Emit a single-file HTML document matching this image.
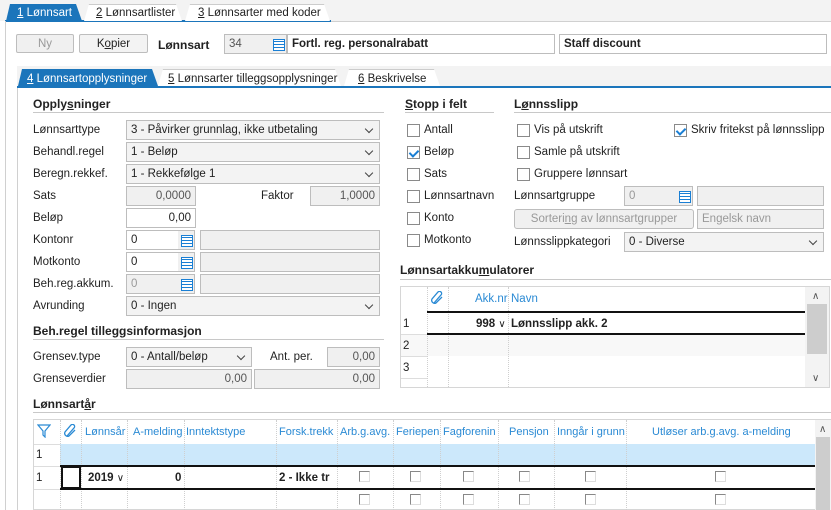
<!DOCTYPE html>
<html><head><meta charset="utf-8"><style>
*{box-sizing:border-box;margin:0;padding:0}
body{width:831px;height:510px;overflow:hidden;background:#fff;font-family:"Liberation Sans",Arial,sans-serif;font-size:11.5px;color:#222;position:relative}
.a{position:absolute}
.t{position:absolute;white-space:nowrap;line-height:14px}
.b{font-weight:bold}
.in{position:absolute;border:1px solid #bdbdbd;background:#fff;height:20px;line-height:18px;padding:0 4px;white-space:nowrap;overflow:hidden}
.dis{background:#f0f0f0;color:#555}
.r{text-align:right}
.dd{position:absolute;border:1px solid #bdbdbd;background:#f3f3f3;height:20px;line-height:18px;padding:0 4px;white-space:nowrap}
.dd:after{content:"";position:absolute;right:7px;top:5px;width:5px;height:5px;border-right:1px solid #444;border-bottom:1px solid #444;transform:rotate(45deg)}
.ic{position:absolute;width:17px;height:20px;background:#f0f0f0;border:1px solid #bdbdbd;border-left:none}
.ic:after{content:"";position:absolute;left:3px;top:4px;width:10px;height:10px;border:1px solid #1a7fd4;background:repeating-linear-gradient(#fff 0 1px,#1a7fd4 1px 2px,#fff 2px 3px);}
.cb{position:absolute;width:13px;height:13px;border:1px solid #8a8a8a;background:#fff}
.ck:after{content:"";position:absolute;left:3px;top:1px;width:4px;height:7px;border-right:2px solid #1a7fd4;border-bottom:2px solid #1a7fd4;transform:rotate(45deg)}
.h{position:absolute;font-weight:bold;font-size:12px;line-height:14px}
.hl{position:absolute;height:1px;background:#c8c8c8}
.gc{position:absolute;width:11px;height:11px;border-left:1px solid #888;border-top:1px solid #888;border-right:1px solid #ddd;border-bottom:1px solid #ddd}
.vl{position:absolute;width:0;border-left:1px dotted #cfcfcf}
.bh{color:#2a8ad4}
u{text-decoration:underline}
</style></head><body>
<div class="a" style="left:0;top:0;width:831px;height:21px;background:#f3f3f3"></div>
<div class="a" style="left:5px;top:20px;width:326px;height:2px;background:#1b75bb"></div>
<div class="a" style="left:5px;top:21px;width:1px;height:489px;background:#d0d0d0"></div>
<div class="a" style="left:6px;top:4px;width:76px;height:17px;background:#1b75bb;clip-path:polygon(4px 0,70px 0,76px 100%,0 100%)"></div>
<div class="t" style="left:17px;top:6px;color:#fff"><u>1</u> Lønnsart</div>
<div class="a" style="left:84px;top:4px;width:98px;height:17px;border-top:1px solid #ccc;background:#fff;clip-path:polygon(5px 0,92px 0,98px 100%,0 100%)"></div>
<div class="t" style="left:96px;top:6px"><u>2</u> Lønnsartlister</div>
<div class="a" style="left:185px;top:4px;width:145px;height:17px;border-top:1px solid #ccc;background:#fff;clip-path:polygon(5px 0,139px 0,145px 100%,0 100%)"></div>
<div class="t" style="left:198px;top:6px"><u>3</u> Lønnsarter med koder</div>
<div class="a" style="left:331px;top:21px;width:500px;height:1px;background:#d0d0d0"></div>

<div class="in dis" style="left:16px;top:34px;width:58px;height:19px;border-radius:2px;text-align:center;color:#999">Ny</div>
<div class="in" style="left:79px;top:34px;width:69px;height:19px;border-radius:2px;text-align:center;background:#f3f3f3">K<u>o</u>pier</div>
<div class="t b" style="left:158px;top:38px;font-size:12px">Lønnsart</div>
<div class="in dis" style="left:224px;top:34px;width:47px">34</div>
<div class="ic" style="left:270px;top:34px"></div>
<div class="in b" style="left:287px;top:34px;width:268px">Fortl. reg. personalrabatt</div>
<div class="in b" style="left:559px;top:34px;width:268px">Staff discount</div>

<div class="a" style="left:17px;top:66px;width:814px;height:20px;background:#f3f3f3"></div>
<div class="a" style="left:17px;top:86px;width:814px;height:2px;background:#1b75bb"></div>
<div class="a" style="left:17px;top:88px;width:1px;height:422px;background:#d0d0d0"></div>
<div class="a" style="left:18px;top:69px;width:140px;height:17px;background:#1b75bb;clip-path:polygon(4px 0,134px 0,140px 100%,0 100%)"></div>
<div class="t" style="left:27px;top:72px;color:#fff"><u>4</u> Lønnsartopplysninger</div>
<div class="a" style="left:158px;top:69px;width:183px;height:17px;background:#fff;border-top:1px solid #ccc;clip-path:polygon(5px 0,177px 0,183px 100%,0 100%)"></div>
<div class="t" style="left:168px;top:72px"><u>5</u> Lønnsarter tilleggsopplysninger</div>
<div class="a" style="left:344px;top:69px;width:96px;height:17px;background:#fff;border-top:1px solid #ccc;clip-path:polygon(5px 0,90px 0,96px 100%,0 100%)"></div>
<div class="t" style="left:358px;top:72px"><u>6</u> Beskrivelse</div>

<div class="h" style="left:33px;top:97px">Opply<u>s</u>ninger</div>
<div class="hl" style="left:33px;top:112px;width:351px"></div>
<div class="t" style="left:33px;top:123px">Lønnsarttype</div>
<div class="dd" style="left:126px;top:120px;width:254px">3 - Påvirker grunnlag, ikke utbetaling</div>
<div class="t" style="left:33px;top:145px">Behandl.regel</div>
<div class="dd" style="left:126px;top:142px;width:254px">1 - Beløp</div>
<div class="t" style="left:33px;top:167px">Beregn.rekkef.</div>
<div class="dd" style="left:126px;top:164px;width:254px">1 - Rekkefølge 1</div>
<div class="t" style="left:33px;top:189px">Sats</div>
<div class="in dis r" style="left:126px;top:186px;width:70px">0,0000</div>
<div class="t" style="left:261px;top:189px">Faktor</div>
<div class="in dis r" style="left:310px;top:186px;width:70px">1,0000</div>
<div class="t" style="left:33px;top:211px">Beløp</div>
<div class="in r" style="left:126px;top:208px;width:70px">0,00</div>
<div class="t" style="left:33px;top:233px">Kontonr</div>
<div class="in" style="left:126px;top:230px;width:53px">0</div><div class="ic" style="left:178px;top:230px"></div>
<div class="in dis" style="left:200px;top:230px;width:180px"></div>
<div class="t" style="left:33px;top:255px">Motkonto</div>
<div class="in" style="left:126px;top:252px;width:53px">0</div><div class="ic" style="left:178px;top:252px"></div>
<div class="in dis" style="left:200px;top:252px;width:180px"></div>
<div class="t" style="left:33px;top:277px">Beh.reg.akkum.</div>
<div class="in dis" style="left:126px;top:274px;width:53px;color:#999">0</div><div class="ic" style="left:178px;top:274px"></div>
<div class="in dis" style="left:200px;top:274px;width:180px"></div>
<div class="t" style="left:33px;top:299px">Avrunding</div>
<div class="dd" style="left:126px;top:296px;width:254px">0 - Ingen</div>

<div class="h" style="left:33px;top:324px">Beh.re<u>g</u>el tilleggsinformasjon</div>
<div class="hl" style="left:33px;top:339px;width:351px"></div>
<div class="t" style="left:33px;top:350px">Grensev.type</div>
<div class="dd" style="left:126px;top:347px;width:126px">0 - Antall/beløp</div>
<div class="t" style="left:270px;top:350px">Ant. per.</div>
<div class="in dis r" style="left:327px;top:347px;width:53px">0,00</div>
<div class="t" style="left:33px;top:372px">Grenseverdier</div>
<div class="in dis r" style="left:126px;top:369px;width:126px">0,00</div>
<div class="in dis r" style="left:254px;top:369px;width:126px">0,00</div>

<div class="h" style="left:405px;top:97px"><u>S</u>topp i felt</div>
<div class="hl" style="left:405px;top:112px;width:89px"></div>
<div class="cb" style="left:407px;top:124px"></div><div class="t" style="left:424px;top:123px">Antall</div>
<div class="cb ck" style="left:407px;top:146px"></div><div class="t" style="left:424px;top:145px">Beløp</div>
<div class="cb" style="left:407px;top:168px"></div><div class="t" style="left:424px;top:167px">Sats</div>
<div class="cb" style="left:407px;top:190px"></div><div class="t" style="left:424px;top:189px">Lønnsartnavn</div>
<div class="cb" style="left:407px;top:212px"></div><div class="t" style="left:424px;top:211px">Konto</div>
<div class="cb" style="left:407px;top:234px"></div><div class="t" style="left:424px;top:233px">Motkonto</div>

<div class="h" style="left:514px;top:97px">L<u>ø</u>nnsslipp</div>
<div class="hl" style="left:514px;top:112px;width:317px"></div>
<div class="cb" style="left:517px;top:124px"></div><div class="t" style="left:534px;top:123px">Vis på utskrift</div>
<div class="cb ck" style="left:674px;top:124px"></div><div class="t" style="left:691px;top:123px">Skriv fritekst på lønnsslipp</div>
<div class="cb" style="left:517px;top:146px"></div><div class="t" style="left:534px;top:145px">Samle på utskrift</div>
<div class="cb" style="left:517px;top:168px"></div><div class="t" style="left:534px;top:167px">Gruppere lønnsart</div>
<div class="t" style="left:514px;top:189px">Lønnsartgruppe</div>
<div class="in dis" style="left:624px;top:186px;width:53px;color:#999">0</div><div class="ic" style="left:676px;top:186px"></div>
<div class="in dis" style="left:697px;top:186px;width:127px"></div>
<div class="in dis" style="left:514px;top:209px;width:180px;border-radius:3px;text-align:center;color:#999">Sorteri<u>n</u>g av lønnsartgrupper</div>
<div class="in dis" style="left:697px;top:209px;width:127px;color:#999">Engelsk navn</div>
<div class="t" style="left:514px;top:235px">Lønnsslippkategori</div>
<div class="dd" style="left:624px;top:232px;width:200px">0 - Diverse</div>

<div class="h" style="left:400px;top:263px">Lønnsartakku<u>m</u>ulatorer</div>
<div class="hl" style="left:400px;top:279px;width:431px"></div>
<div class="a" style="left:400px;top:286px;width:430px;height:102px;border:1px solid #d6d6d6"></div>
<div class="a" style="left:401px;top:334px;width:404px;height:22px;background:#f8f8f8"></div>
<div class="vl" style="left:427px;top:287px;height:100px"></div>
<div class="vl" style="left:448px;top:287px;height:100px"></div>
<div class="vl" style="left:508px;top:287px;height:100px"></div>
<div class="a" style="left:401px;top:334px;width:26px;height:1px;background:#ddd"></div>
<div class="a" style="left:401px;top:356px;width:26px;height:1px;background:#ddd"></div>
<div class="a" style="left:401px;top:378px;width:26px;height:1px;background:#ddd"></div>
<svg class="a" style="left:431px;top:291px" width="13" height="14"><path d="M3 12L10 4A2 2 0 0 0 7 1L1 8A3 3 0 0 0 5 12L11 6" fill="none" stroke="#2a8ad4" stroke-width="1.3"/></svg>
<div class="t bh" style="left:475px;top:292px">Akk.nr</div>
<div class="t bh" style="left:511px;top:292px">Navn</div>
<div class="a" style="left:427px;top:311px;width:378px;height:2px;background:#111"></div>
<div class="a" style="left:427px;top:333px;width:378px;height:2px;background:#111"></div>
<div class="t" style="left:403px;top:317px">1</div>
<div class="t b" style="left:476px;top:317px">998 <span style="font-weight:normal;font-size:10px">&#x2228;</span></div>
<div class="t b" style="left:511px;top:317px">Lønnsslipp akk. 2</div>
<div class="t" style="left:403px;top:339px">2</div>
<div class="t" style="left:403px;top:361px">3</div>
<div class="a" style="left:805px;top:287px;width:24px;height:100px;background:#f3f3f3"></div>
<div class="a" style="left:807px;top:304px;width:20px;height:50px;background:#cdcdcd"></div>
<div class="t" style="left:812px;top:290px;font-size:10px;color:#555">&#x2227;</div>
<div class="t" style="left:812px;top:372px;font-size:10px;color:#555">&#x2228;</div>

<div class="h" style="left:33px;top:397px">Lønnsart<u>å</u>r</div>
<div class="hl" style="left:33px;top:412px;width:798px"></div>
<div class="a" style="left:33px;top:419px;width:798px;height:91px;border:1px solid #d6d6d6"></div>
<div class="a" style="left:60px;top:444px;width:755px;height:22px;background:#cce8fb"></div>
<div class="a" style="left:34px;top:444px;width:26px;height:1px;background:#ddd"></div>
<div class="a" style="left:34px;top:466px;width:26px;height:1px;background:#ddd"></div>
<div class="a" style="left:34px;top:489px;width:26px;height:1px;background:#ddd"></div>
<div class="vl" style="left:60px;top:420px;height:90px"></div>
<div class="vl" style="left:81px;top:420px;height:90px"></div>
<div class="vl" style="left:127px;top:420px;height:90px"></div>
<div class="vl" style="left:184px;top:420px;height:90px"></div>
<div class="vl" style="left:276px;top:420px;height:90px"></div>
<div class="vl" style="left:337px;top:420px;height:90px"></div>
<div class="vl" style="left:393px;top:420px;height:90px"></div>
<div class="vl" style="left:440px;top:420px;height:90px"></div>
<div class="vl" style="left:498px;top:420px;height:90px"></div>
<div class="vl" style="left:554px;top:420px;height:90px"></div>
<div class="vl" style="left:626px;top:420px;height:90px"></div>
<svg class="a" style="left:37px;top:424px" width="14" height="14"><path d="M1 1H13L8 7V13L6 11V7Z" fill="none" stroke="#2a8ad4" stroke-width="1.2"/></svg>
<svg class="a" style="left:64px;top:424px" width="13" height="14"><path d="M3 12L10 4A2 2 0 0 0 7 1L1 8A3 3 0 0 0 5 12L11 6" fill="none" stroke="#2a8ad4" stroke-width="1.3"/></svg>
<div class="t bh" style="left:85px;top:425px;font-size:11px">Lønnsår</div>
<div class="t bh" style="left:133px;top:425px;font-size:11px">A-melding</div>
<div class="t bh" style="left:186px;top:425px;font-size:11px">Inntektstype</div>
<div class="t bh" style="left:279px;top:425px;font-size:11px">Forsk.trekk</div>
<div class="t bh" style="left:340px;top:425px;font-size:11px">Arb.g.avg.</div>
<div class="t bh" style="left:396px;top:425px;font-size:11px">Feriepen</div>
<div class="t bh" style="left:443px;top:425px;font-size:11px;width:54px;overflow:hidden">Fagforenin</div>
<div class="t bh" style="left:509px;top:425px;font-size:11px">Pensjon</div>
<div class="t bh" style="left:557px;top:425px;font-size:11px;width:68px;overflow:hidden">Inngår i grunnl</div>
<div class="t bh" style="left:652px;top:425px;font-size:11px">Utløser arb.g.avg. a-melding</div>
<div class="t" style="left:36px;top:448px">1</div>
<div class="a" style="left:60px;top:465px;width:755px;height:2px;background:#111"></div>
<div class="a" style="left:60px;top:488px;width:755px;height:2px;background:#111"></div>
<div class="a" style="left:61px;top:466px;width:20px;height:23px;border:2px solid #111"></div>
<div class="t" style="left:36px;top:471px">1</div>
<div class="t b" style="left:88px;top:471px">2019 <span style="font-weight:normal;font-size:10px">&#x2228;</span></div>
<div class="t b" style="left:175px;top:471px">0</div>
<div class="t b" style="left:279px;top:471px">2 - Ikke tr</div>
<div class="gc" style="left:359px;top:471px"></div><div class="gc" style="left:410px;top:471px"></div><div class="gc" style="left:463px;top:471px"></div><div class="gc" style="left:519px;top:471px"></div><div class="gc" style="left:585px;top:471px"></div><div class="gc" style="left:715px;top:471px"></div>
<div class="gc" style="left:359px;top:494px"></div><div class="gc" style="left:410px;top:494px"></div><div class="gc" style="left:463px;top:494px"></div><div class="gc" style="left:519px;top:494px"></div><div class="gc" style="left:585px;top:494px"></div><div class="gc" style="left:715px;top:494px"></div>
<div class="a" style="left:815px;top:420px;width:16px;height:90px;background:#f3f3f3"></div>
<div class="a" style="left:816px;top:437px;width:14px;height:73px;background:#cdcdcd"></div>
<div class="t" style="left:819px;top:423px;font-size:10px;color:#555">&#x2227;</div>
</body></html>
